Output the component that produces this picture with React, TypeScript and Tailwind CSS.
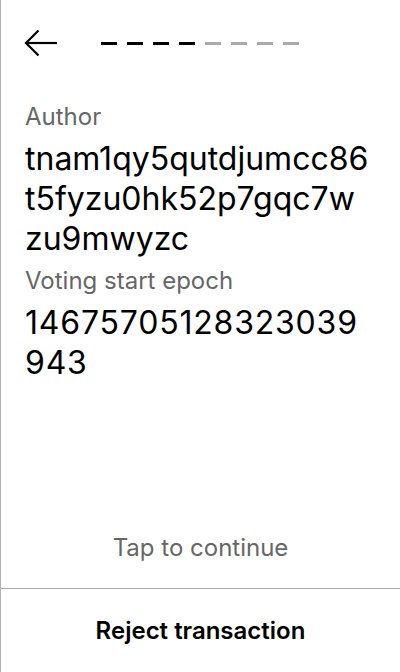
import React from "react";

export default function App() {
  const dashes = [0, 1, 2, 3, 4, 5, 6, 7];
  return (
    <div className="w-[400px] h-[672px] flex flex-col bg-white border-l border-[#b0b0b0] text-black font-[Inter,sans-serif]">
      <div className="h-[86px] flex items-center pl-[23px] shrink-0">
        <svg width="34" height="28" viewBox="0 0 34 28" fill="none">
          <path d="M2 14 H33" stroke="#000" strokeWidth="2.2" />
          <path d="M14.5 1.5 L2 14 L14.5 26.5" stroke="#000" strokeWidth="2.2" />
        </svg>
        <div className="flex gap-[10px] ml-[43px]">
          {dashes.map((i) => (
            <div
              key={i}
              className={i < 4 ? "w-4 h-[3px] bg-black" : "w-4 h-[3px] bg-[#aaaaaa]"}
            />
          ))}
        </div>
      </div>
      <div className="flex-1 pl-6 pr-[30px] pt-[15px] flex flex-col">
        <div className="flex flex-col gap-[6px]">
          <div className="text-[24px] leading-[32px] text-[#666666]">Author</div>
          <div className="text-[32px] leading-[40px] break-all">
            tnam1qy5qutdjumcc86t5fyzu0hk52p7gqc7wzu9mwyzc
          </div>
          <div className="text-[24px] leading-[32px] text-[#666666]">Voting start epoch</div>
          <div className="text-[32px] leading-[40px] break-all tracking-[0.8px]">14675705128323039943</div>
        </div>
        <div className="flex-1" />
        <div className="text-center text-[24px] leading-[32px] text-[#666666] pb-[24px] -mr-[6px]">
          Tap to continue
        </div>
      </div>
      <div className="h-[84px] border-t border-[#aaaaaa] flex items-center justify-center shrink-0">
        <span className="text-[24px] leading-[32px] font-semibold">Reject transaction</span>
      </div>
    </div>
  );
}
